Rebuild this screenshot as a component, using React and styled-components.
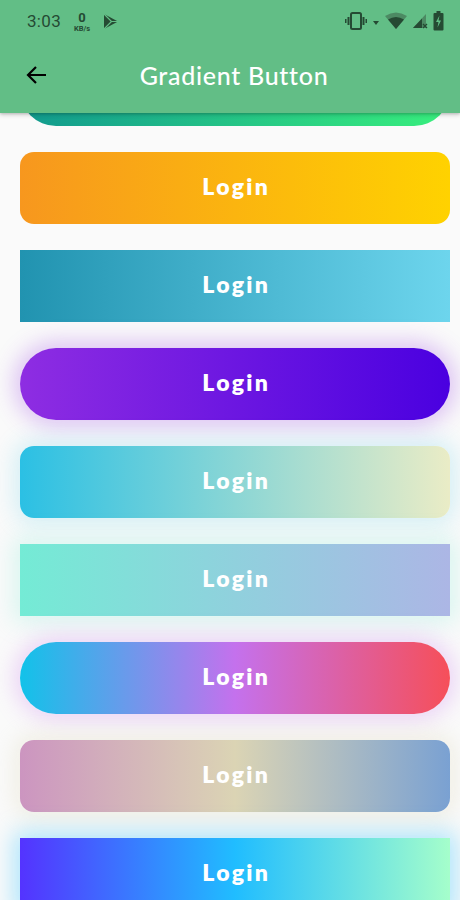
import React from 'react';
import styled, { createGlobalStyle } from 'styled-components';

const GlobalStyle = createGlobalStyle`
  html, body {
    margin: 0;
    padding: 0;
    background: #fafafa;
    overflow: hidden;
    font-family: Lato, "Open Sans", sans-serif;
  }
`;

const Page = styled.div`
  width: 460px;
  height: 900px;
  position: relative;
  overflow: hidden;
  background: #fafafa;
`;

const Header = styled.header`
  position: absolute;
  top: 0;
  left: 0;
  right: 0;
  z-index: 10;
  background: #62be86;
  box-shadow: 0 2px 4px rgba(0, 0, 0, 0.18), 0 1px 2px rgba(0, 0, 0, 0.1);
`;

const StatusBar = styled.div`
  height: 40px;
  display: flex;
  align-items: center;
  justify-content: space-between;
  padding: 2px 16px 0 27px;
  box-sizing: border-box;
  color: #254a33;
`;

const StatusLeft = styled.div`
  display: flex;
  align-items: center;
  gap: 13px;
`;

const StatusRight = styled.div`
  display: flex;
  align-items: center;
  gap: 5px;
`;

const Clock = styled.span`
  font-family: Roboto, "Noto Sans", sans-serif;
  font-size: 17px;
  letter-spacing: 0.3px;
`;

const Speed = styled.div`
  display: flex;
  flex-direction: column;
  align-items: center;
  font-family: Roboto, sans-serif;
  font-weight: 700;
  line-height: 1;
  margin-top: 2px;
`;

const SpeedValue = styled.span`
  font-size: 13px;
`;

const SpeedUnit = styled.span`
  font-size: 7.5px;
  margin-top: 1px;
`;

const Toolbar = styled.div`
  height: 73px;
  display: grid;
  grid-template-columns: 74px 1fr 74px;
  align-items: center;
  padding-bottom: 3px;
  box-sizing: border-box;
`;

const BackButton = styled.button`
  background: none;
  border: none;
  padding: 0;
  margin-left: 24px;
  width: 26px;
  height: 26px;
  display: flex;
  align-items: center;
  justify-content: center;
  cursor: pointer;
`;

const Title = styled.h1`
  margin: 0;
  text-align: center;
  color: #fff;
  font-size: 25px;
  font-weight: 500;
  letter-spacing: 0.7px;
  padding-left: 8px;
  white-space: nowrap;
`;

const List = styled.main`
  display: flex;
  flex-direction: column;
  gap: 26px;
  padding: 54px 10px 0 20px;
`;

const GradientButton = styled.button`
  height: 72px;
  width: 430px;
  border: none;
  border-radius: ${({ radius }) => radius}px;
  background: linear-gradient(to right, ${({ colors }) => colors.join(', ')});
  box-shadow: ${({ glow }) => (glow ? `0 0 22px 6px ${glow}` : 'none')};
  color: #fff;
  font-family: Lato, "Open Sans", sans-serif;
  font-size: 23px;
  font-weight: 800;
  letter-spacing: 2.3px;
  padding: 0 0 5px 2.3px;
  cursor: pointer;
  flex-shrink: 0;
`;

const buttons = [
  { colors: ['#11998e', '#38ef7d'], radius: 36 },
  { colors: ['#f7971e', '#ffd200'], radius: 14 },
  { colors: ['#2193b0', '#6dd5ed'], radius: 0 },
  { colors: ['#8e2de2', '#4a00e0'], radius: 36, glow: 'rgba(142, 45, 226, 0.28)' },
  { colors: ['#2bc0e4', '#eaecc6'], radius: 14, glow: 'rgba(43, 192, 228, 0.18)' },
  { colors: ['#74ebd5', '#acb6e5'], radius: 0, glow: 'rgba(116, 235, 213, 0.25)' },
  { colors: ['#12c2e9', '#c471ed', '#f64f59'], radius: 36, glow: 'rgba(196, 113, 237, 0.28)' },
  { colors: ['#cc95c0', '#dbd4b4', '#7aa1d2'], radius: 14, glow: 'rgba(219, 212, 180, 0.3)' },
  { colors: ['#5433ff', '#20bdff', '#a5fecb'], radius: 0, glow: 'rgba(32, 189, 255, 0.35)' },
];

const PlayIcon = () => (
  <svg width="16" height="17" viewBox="0 0 16 17">
    <path d="M1 1 L15 8.5 L1 16 Z" fill="#254a33" />
    <path d="M1 1 L8.5 8.5 L1 16" fill="none" stroke="#62be86" strokeWidth="1.2" />
    <path d="M8.5 8.5 L15 8.5" stroke="#62be86" strokeWidth="1" />
  </svg>
);

const VibrateIcon = () => (
  <svg width="22" height="18" viewBox="0 0 22 18">
    <rect x="6" y="1" width="10" height="16" rx="1.5" fill="none" stroke="#254a33" strokeWidth="2" />
    <rect x="2.5" y="5" width="2" height="8" fill="#254a33" />
    <rect x="17.5" y="5" width="2" height="8" fill="#254a33" />
    <rect x="0" y="7" width="1.5" height="4" fill="#254a33" />
    <rect x="20.5" y="7" width="1.5" height="4" fill="#254a33" />
  </svg>
);

const DataArrow = () => (
  <svg width="8" height="18" viewBox="0 0 8 18">
    <path d="M1 9 L7 9 L4 13 Z" fill="#254a33" />
  </svg>
);

const WifiIcon = () => (
  <svg width="22" height="18" viewBox="0 0 22 18">
    <path d="M0 4 Q11 -3 22 4 L11 17 Z" fill="#4c8a63" />
    <path d="M3 7.5 Q11 2.5 19 7.5 L11 17 Z" fill="#254a33" />
  </svg>
);

const SignalIcon = () => (
  <svg width="16" height="18" viewBox="0 0 16 18">
    <path d="M1 16 L14 2 L14 16 Z" fill="#4c8a63" />
    <path d="M1 16 L10 6.5 L10 16 Z" fill="#254a33" />
    <path d="M11 12 L15 16 M15 12 L11 16" stroke="#254a33" strokeWidth="1.3" />
  </svg>
);

const BatteryIcon = () => (
  <svg width="11" height="20" viewBox="0 0 11 20">
    <rect x="3.5" y="0" width="4" height="2" fill="#254a33" />
    <rect x="0.5" y="2" width="10" height="17.5" rx="1" fill="#254a33" />
    <path d="M6.5 4.5 L3 11 L5.5 11 L4.5 16.5 L8 9.5 L5.5 9.5 Z" fill="#62be86" />
  </svg>
);

const ArrowLeft = () => (
  <svg width="24" height="24" viewBox="0 0 24 24">
    <path d="M21 12 H3.5 M11 4 L3 12 L11 20" fill="none" stroke="#000" strokeWidth="2.2" />
  </svg>
);

const App = () => (
  <Page>
    <GlobalStyle />
    <Header>
      <StatusBar>
        <StatusLeft>
          <Clock>3:03</Clock>
          <Speed>
            <SpeedValue>0</SpeedValue>
            <SpeedUnit>KB/s</SpeedUnit>
          </Speed>
          <PlayIcon />
        </StatusLeft>
        <StatusRight>
          <VibrateIcon />
          <DataArrow />
          <WifiIcon />
          <SignalIcon />
          <BatteryIcon />
        </StatusRight>
      </StatusBar>
      <Toolbar>
        <BackButton aria-label="Back">
          <ArrowLeft />
        </BackButton>
        <Title>Gradient Button</Title>
      </Toolbar>
    </Header>
    <List>
      {buttons.map((b, i) => (
        <GradientButton key={i} colors={b.colors} radius={b.radius} glow={b.glow}>
          Login
        </GradientButton>
      ))}
    </List>
  </Page>
);

export default App;
